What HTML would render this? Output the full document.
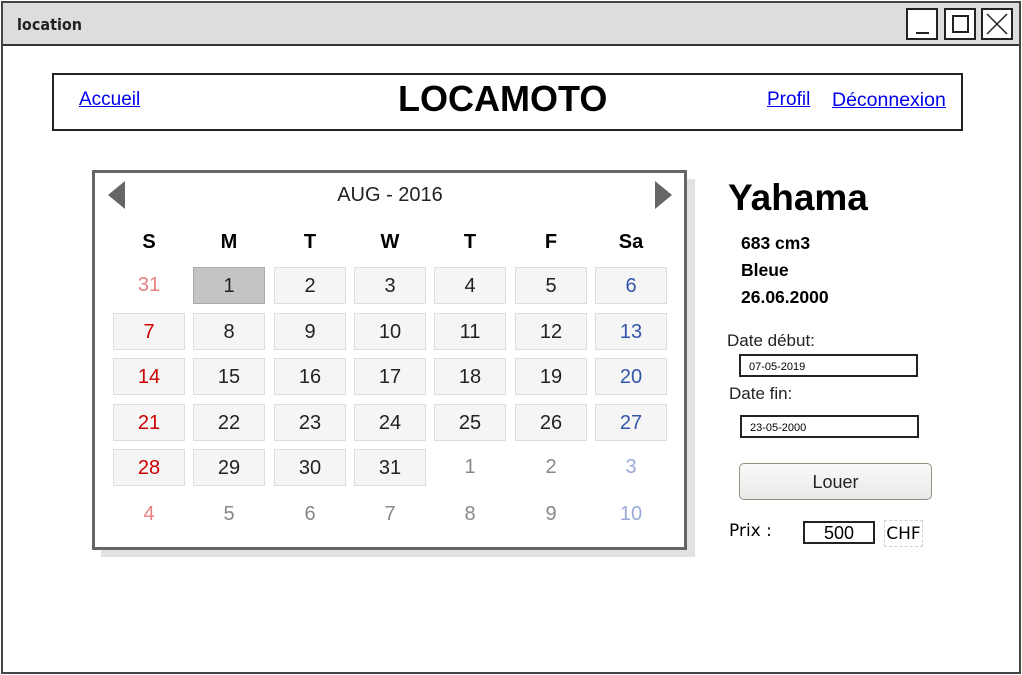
<!DOCTYPE html>
<html><head><meta charset="utf-8"><style>
*{margin:0;padding:0;box-sizing:border-box}
body{width:1022px;height:675px;position:relative;background:#fff;font-family:"Liberation Sans",sans-serif;overflow:hidden}
.a{position:absolute}
.win{left:1px;top:1px;width:1020px;height:673px;border:2px solid #444}
.tb{left:3px;top:3px;width:1016px;height:43px;background:#ddd;border-bottom:2px solid #333}
.btn{top:8px;width:32px;height:32px;border:2px solid #222;background:#fff}
.c{position:absolute;width:72px;height:37px;border:1px solid #ddd;background:#f5f5f5;text-align:center;line-height:37px;font-size:20px;color:#222}
.h{position:absolute;width:72px;text-align:center;font-size:20px;font-weight:bold;top:231px}
.r{color:#cc0000}.b{color:#3355aa}.fr{color:#e88080;border:none;background:none}.fb{color:#99aad8;border:none;background:none}.g{color:#888;border:none;background:none}
a{color:#00e;text-decoration:underline}
.inp{border:2px solid #222;font-size:11px;padding-left:8px;line-height:22px;height:23px}
</style></head><body>
<div class="a win"></div>
<div class="a tb"></div>
<div class="a" style="left:17px;top:15px;font-family:'Comic Sans MS','DejaVu Sans Condensed','DejaVu Sans',sans-serif;font-size:16px;font-weight:bold;color:#222">location</div>
<div class="a btn" style="left:906px"><div class="a" style="left:8px;top:22px;width:13px;height:2px;background:#222"></div></div>
<div class="a btn" style="left:944px"><div class="a" style="left:6px;top:5px;width:17px;height:18px;border:2px solid #222"></div></div>
<div class="a btn" style="left:981px"><svg class="a" style="left:3px;top:3px" width="22" height="22"><path d="M1 1L21 21M21 1L1 21" stroke="#222" stroke-width="1.5"/></svg></div>

<div class="a" style="left:52px;top:73px;width:911px;height:58px;border:2px solid #222"></div>
<a class="a" style="left:79px;top:89px;font-size:19px">Accueil</a>
<div class="a" style="left:398px;top:78px;font-size:36px;font-weight:bold">LOCAMOTO</div>
<a class="a" style="left:767px;top:89px;font-size:19px">Profil</a>
<a class="a" style="left:832px;top:89px;font-size:19.5px">Déconnexion</a>

<div class="a" style="left:101px;top:179px;width:594px;height:378px;background:#e2e2e2"></div>
<div class="a" style="left:92px;top:170px;width:595px;height:380px;border:3px solid #666;background:#fff"></div>
<svg class="a" style="left:107px;top:180px" width="20" height="30"><path d="M18 1V29L1 15Z" fill="#666"/></svg>
<svg class="a" style="left:653px;top:180px" width="20" height="30"><path d="M2 1V29L19 15Z" fill="#666"/></svg>
<div class="a" style="left:290px;top:184px;width:200px;text-align:center;font-size:20px;color:#222">AUG - 2016</div>
<div class="h" style="left:113px">S</div><div class="h" style="left:193px">M</div><div class="h" style="left:274px">T</div><div class="h" style="left:354px">W</div><div class="h" style="left:434px">T</div><div class="h" style="left:515px">F</div><div class="h" style="left:595px">Sa</div>

<div class="c fr" style="left:113px;top:267px">31</div><div class="c" style="left:193px;top:267px;background:#c4c4c4;border-color:#aaa">1</div><div class="c" style="left:274px;top:267px">2</div><div class="c" style="left:354px;top:267px">3</div><div class="c" style="left:434px;top:267px">4</div><div class="c" style="left:515px;top:267px">5</div><div class="c b" style="left:595px;top:267px">6</div>
<div class="c r" style="left:113px;top:313px">7</div><div class="c" style="left:193px;top:313px">8</div><div class="c" style="left:274px;top:313px">9</div><div class="c" style="left:354px;top:313px">10</div><div class="c" style="left:434px;top:313px">11</div><div class="c" style="left:515px;top:313px">12</div><div class="c b" style="left:595px;top:313px">13</div>
<div class="c r" style="left:113px;top:358px">14</div><div class="c" style="left:193px;top:358px">15</div><div class="c" style="left:274px;top:358px">16</div><div class="c" style="left:354px;top:358px">17</div><div class="c" style="left:434px;top:358px">18</div><div class="c" style="left:515px;top:358px">19</div><div class="c b" style="left:595px;top:358px">20</div>
<div class="c r" style="left:113px;top:404px">21</div><div class="c" style="left:193px;top:404px">22</div><div class="c" style="left:274px;top:404px">23</div><div class="c" style="left:354px;top:404px">24</div><div class="c" style="left:434px;top:404px">25</div><div class="c" style="left:515px;top:404px">26</div><div class="c b" style="left:595px;top:404px">27</div>
<div class="c r" style="left:113px;top:449px">28</div><div class="c" style="left:193px;top:449px">29</div><div class="c" style="left:274px;top:449px">30</div><div class="c" style="left:354px;top:449px">31</div><div class="c g" style="left:434px;top:449px">1</div><div class="c g" style="left:515px;top:449px">2</div><div class="c fb" style="left:595px;top:449px">3</div>
<div class="c fr" style="left:113px;top:496px">4</div><div class="c g" style="left:193px;top:496px">5</div><div class="c g" style="left:274px;top:496px">6</div><div class="c g" style="left:354px;top:496px">7</div><div class="c g" style="left:434px;top:496px">8</div><div class="c g" style="left:515px;top:496px">9</div><div class="c fb" style="left:595px;top:496px">10</div>

<div class="a" style="left:728px;top:177px;font-size:37px;font-weight:bold">Yahama</div>
<div class="a" style="left:741px;top:230px;font-size:17.5px;font-weight:bold;line-height:27px">683 cm3<br>Bleue<br>26.06.2000</div>
<div class="a" style="left:727px;top:331px;font-size:17px;color:#222">Date début:</div>
<div class="a inp" style="left:739px;top:354px;width:179px">07-05-2019</div>
<div class="a" style="left:729px;top:384px;font-size:17px;color:#222">Date fin:</div>
<div class="a inp" style="left:740px;top:415px;width:179px">23-05-2000</div>
<div class="a" style="left:739px;top:463px;width:193px;height:37px;border:1px solid #998f80;border-radius:5px;background:linear-gradient(#fafafa,#e8e8e8);text-align:center;line-height:36px;font-size:18px;color:#222">Louer</div>
<div class="a" style="left:729px;top:521px;font-family:'Comic Sans MS','DejaVu Sans',sans-serif;font-size:17px">Prix :</div>
<div class="a" style="left:803px;top:521px;width:72px;height:23px;border:2px solid #222;text-align:center;font-size:18px;line-height:20px">500</div>
<div class="a" style="left:884px;top:520px;width:39px;height:27px;border:1px dashed #ccd;font-family:'Comic Sans MS','DejaVu Sans',sans-serif;font-size:17px;line-height:27px;text-align:center">CHF</div>
</body></html>
